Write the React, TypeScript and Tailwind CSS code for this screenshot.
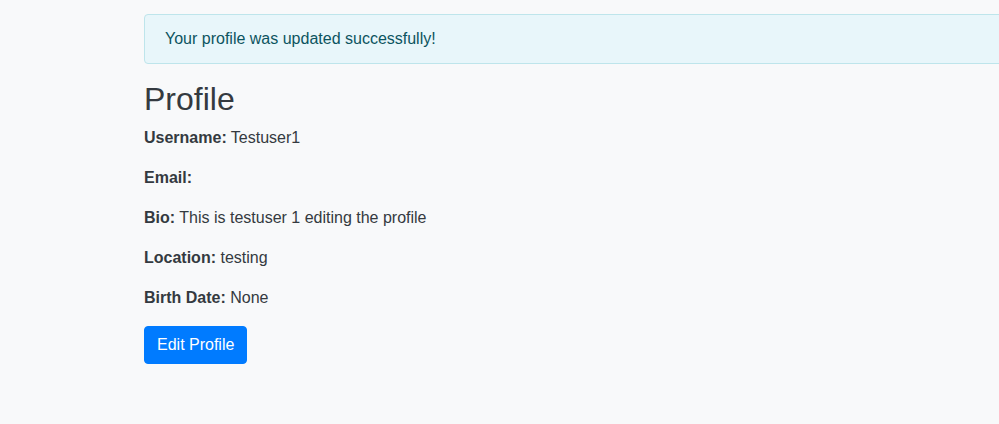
export default function App() {
  const rows: [string, string][] = [
    ["Username:", "Testuser1"],
    ["Email:", ""],
    ["Bio:", "This is testuser 1 editing the profile"],
    ["Location:", "testing"],
    ["Birth Date:", "None"],
  ];
  return (
    <div
      className="w-[999px] h-[424px] overflow-hidden bg-[#f8f9fa] text-[#343a40]"
      style={{ fontFamily: '"Liberation Sans", Arial, sans-serif' }}
    >
      <div className="ml-[144px] w-[880px] pt-[14px]">
        <div className="border border-[#bee5eb] bg-[#e8f6fa] text-[#0c5460] rounded px-5 py-3 text-base leading-6 mb-4">
          Your profile was updated successfully!
        </div>
        <h2 className="text-[32px] leading-[38.4px] font-medium mb-2">Profile</h2>
        {rows.map(([k, v]) => (
          <p key={k} className="text-base leading-6 mb-4">
            <strong className="font-bold">{k}</strong>
            {v ? " " + v : ""}
          </p>
        ))}
        <button className="bg-[#007bff] text-white border border-[#007bff] rounded px-3 py-1.5 text-base leading-6">
          Edit Profile
        </button>
      </div>
    </div>
  );
}
